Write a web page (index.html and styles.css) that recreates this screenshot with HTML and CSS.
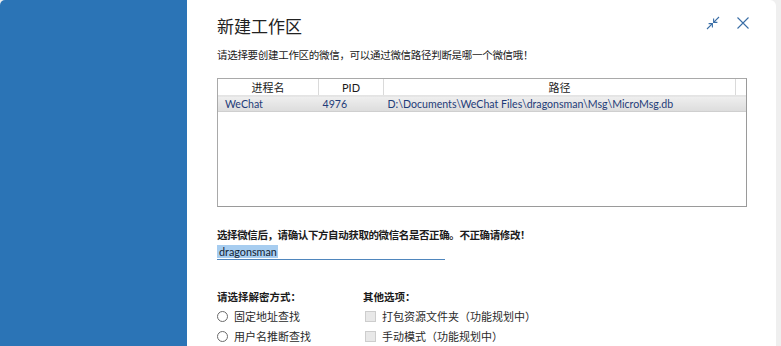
FILE: index.html
```html
<!DOCTYPE html>
<html lang="zh-CN">
<head>
    <meta charset="UTF-8" />
    <title>新建工作区</title>
    <link rel="stylesheet" href="styles.css">
</head>
<body>
    <div class="window">
        <div class="side"></div>
        <div class="main">
            <div class="tools">
                <svg class="ico" width="16" height="16" viewBox="0 0 16 16">
                    <path d="M14 2 L8.6 7.4 M8.6 3.6 V7.4 H12.4 M2 14 L7.4 8.6 M3.6 8.6 H7.4 V12.4" fill="none" stroke="#3a6ea6" stroke-width="1.1"/>
                </svg>
                <svg class="ico" width="16" height="16" viewBox="0 0 16 16">
                    <path d="M2.5 2.5 L13.5 13.5 M13.5 2.5 L2.5 13.5" fill="none" stroke="#3a6ea6" stroke-width="1.1"/>
                </svg>
            </div>

            <h1>新建工作区</h1>
            <p class="sub">请选择要创建工作区的微信，可以通过微信路径判断是哪一个微信哦！</p>

            <div class="list">
                <table>
                    <thead>
                        <tr>
                            <th class="c1">进程名</th>
                            <th class="c2">PID</th>
                            <th class="c3">路径</th>
                            <th class="c4"></th>
                        </tr>
                    </thead>
                    <tbody>
                        <tr class="sel">
                            <td>WeChat</td>
                            <td>4976</td>
                            <td>D:\Documents\WeChat Files\dragonsman\Msg\MicroMsg.db</td>
                            <td></td>
                        </tr>
                    </tbody>
                </table>
            </div>

            <p class="label">选择微信后，请确认下方自动获取的微信名是否正确。不正确请修改！</p>
            <div class="input"><span class="hl">dragonsman</span></div>

            <div class="opts">
                <div class="col">
                    <p class="label">请选择解密方式：</p>
                    <div class="row"><span class="radio"></span>固定地址查找</div>
                    <div class="row"><span class="radio"></span>用户名推断查找</div>
                </div>
                <div class="col">
                    <p class="label">其他选项：</p>
                    <div class="row"><span class="check"></span>打包资源文件夹（功能规划中）</div>
                    <div class="row"><span class="check"></span>手动模式（功能规划中）</div>
                </div>
            </div>
        </div>
    </div>
</body>
</html>
```

FILE: styles.css
```css
body {
    margin: 0;
    background: #efefef;
    font-family: Lato, 'Noto Sans CJK SC', sans-serif;
    color: #1b1b1b;
    height: 346px;
    overflow: hidden;
}
.window {
    display: flex;
    width: 776px;
    height: 346px;
    border-radius: 5px 6px 0 0;
    overflow: hidden;
    background: #fff;
}
.side {
    width: 187px;
    background: #2b74b6;
}
.main {
    flex: 1;
    position: relative;
    padding-left: 30px;
}
.tools {
    position: absolute;
    top: 15px;
    right: 25px;
    display: flex;
    gap: 14px;
}
h1 {
    margin: 14px 0 0;
    font-size: 17px;
    line-height: 26px;
    font-weight: normal;
    color: #222;
}
p.sub {
    margin: 7px 0 0;
    font-size: 10.5px;
    letter-spacing: -0.3px;
    line-height: 16px;
}
.list {
    margin-top: 15px;
    width: 528px;
    height: 127px;
    border: 1px solid #a9a9a9;
    border-right-color: #9a9a9a;
    border-bottom-color: #9a9a9a;
}
table {
    width: 100%;
    border-collapse: collapse;
    font-size: 10.6px;
}
th {
    height: 16px;
    padding: 0;
    font-weight: normal;
    font-size: 11px;
    border-right: 1px solid #dadada;
    border-bottom: 1px solid #e4e4e4;
    text-align: center;
}
th.c1 { width: 100px; }
th.c2 { width: 64px; }
th.c3 { width: 351px; }
th.c4 { border-right: none; }
td {
    height: 15px;
    padding: 0 0 0 7px;
    color: #1e3c78;
    text-align: left;
}
tr.sel td {
    background: linear-gradient(#efefef, #dcdcdc);
    border-top: 1px solid #d6d6d6;
    border-bottom: 1px solid #cfcfcf;
}
tr.sel td:nth-child(2) { padding-left: 4px; }
tr.sel td:nth-child(3) { padding-left: 4px; }
p.label {
    margin: 20px 0 0;
    font-size: 10.5px;
    letter-spacing: -0.4px;
    line-height: 16px;
    font-weight: bold;
}
.input {
    margin-top: 2px;
    width: 228px;
    height: 14px;
    border-bottom: 1px solid #4f86bd;
    font-size: 10.8px;
    line-height: 14px;
}
.hl {
    background: #a7cdf0;
    padding: 0 1px 0 2px;
    color: #123;
}
.opts {
    display: flex;
    margin-top: 12px;
}
.col {
    width: 146px;
}
.col:last-child {
    width: auto;
}
.row {
    display: flex;
    align-items: center;
    height: 20px;
    font-size: 11px;
    color: #2a2a2a;
}
.opts p.label {
    margin: 17px 0 1px;
    letter-spacing: 0;
}
.radio {
    width: 9px;
    height: 9px;
    border: 1px solid #6b6b6b;
    border-radius: 50%;
    margin: 0 6px 0 0;
}
.check {
    width: 9px;
    height: 9px;
    border: 1px solid #cdcdcd;
    background: #e8e8e8;
    margin: 0 6px 0 2px;
}
```
